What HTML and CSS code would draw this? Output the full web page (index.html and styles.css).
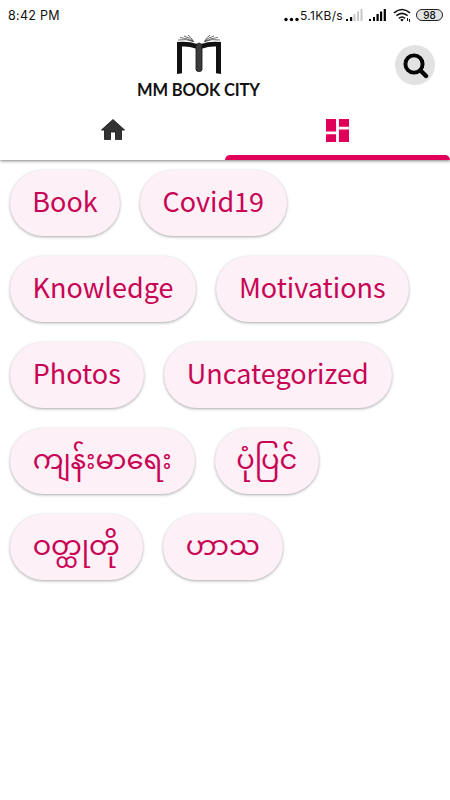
FILE: index.html
```html
<!DOCTYPE html>
<html lang="my">
<head>
<meta charset="utf-8">
<title>MM Book City</title>
<link rel="stylesheet" href="styles.css">
</head>
<body>
<header class="header">
  <div class="status">
    <span class="clock">8:42 PM</span>
    <svg class="dots" viewBox="0 0 16 5"><circle cx="2" cy="2.500" r="1.700"/><circle cx="7.500" cy="2.500" r="1.700"/><circle cx="13" cy="2.500" r="1.700"/></svg>
    <span class="speed">5.1KB/s</span>
    <svg class="signal" viewBox="0 0 18 12"><path d="M0 10h2v2H0zM4 8h2.200v4H4z"/><path fill="#c8c8c8" d="M7.500 5h2v7h-2zM11 2.500h2V12h-2zM14.500 0h2v12h-2z"/></svg>
    <svg class="signal second" viewBox="0 0 18 12"><path d="M0 10h2v2H0zM4 8h2v4H4zM7.500 5h2.200v7H7.500zM11 2.500h2.200V12H11zM14.700 0h2.200v12h-2.200z"/></svg>
    <svg class="wifi" viewBox="0 0 19 15"><g fill="none" stroke="#111" stroke-width="1.600"><path d="M1 4.800Q9 -1.800 17 4.800M3.400 7.600Q9 3 14.600 7.600M5.900 10.300Q9 7.700 12.100 10.300"/></g><path d="M7.200 11.800Q9 10.400 10.800 11.800L9 13.500z"/><path d="M14.500 13v-3M16.500 11v3" stroke="#111"/></svg>
    <span class="battery">98</span>
  </div>
  <div class="brand">
    <div class="logo">
      <svg class="book" viewBox="0 0 48 42">
        <path fill="#111" d="M2 8Q14 7 22 10H26Q34 7 46 8V40L41 39.300V12.500Q34 12 27.500 14.500H20.500Q14 12 7 12.500V39.300L2 40z"/>
        <path fill="#3c3c3c" stroke="#111" stroke-width=".8" d="M21 10.500L24 9L27 10.500V35.500Q27 37.500 24 37.500Q21 37.500 21 35.500z"/>
        <path fill="none" stroke="#333" stroke-width=".7" d="M3 6Q11 4.500 18.500 7.500M5 3.500Q12 4 18.500 7.500M9 2Q15 3.500 18.500 7.500M13 1Q17 4 18.500 7.500M45 6Q37 4.500 29.500 7.500M43 3.500Q36 4 29.500 7.500M39 2Q33 3.500 29.500 7.500M35 1Q31 4 29.500 7.500"/>
      </svg>
      <svg class="wordmark" viewBox="0 0 126 20"><text x="2" y="15" textLength="123">MM BOOK CITY</text></svg>
    </div>
    <button class="search" aria-label="Search"><svg viewBox="0 0 26 26"><circle cx="11" cy="11" r="8.600" fill="none" stroke="#050505" stroke-width="3.900"/><path d="M17.500 17.500L23 23" stroke="#050505" stroke-width="4.400" stroke-linecap="round"/></svg></button>
  </div>
  <nav class="tabs">
    <a class="tab"><svg viewBox="0 0 24 21"><path fill="#333" stroke="#111" stroke-width=".8" d="M12 .5L.4 11H3.500V20.600h6V13h5v7.600h6V11h3.100z"/></svg></a>
    <a class="tab active"><svg viewBox="0 0 24 24"><path fill="#e0005a" d="M0 0h10.500v13H0zM13.500 0H24v8H13.500zM0 16h10.500v8H0zM13.500 11H24v13H13.500z"/></svg></a>
  </nav>
</header>
<main class="categories">
  <div class="row"><a class="pill w110">Book</a><a class="pill w147">Covid19</a></div>
  <div class="row"><a class="pill w186">Knowledge</a><a class="pill w193">Motivations</a></div>
  <div class="row"><a class="pill w134">Photos</a><a class="pill w229">Uncategorized</a></div>
  <div class="row"><a class="pill w185 my">ကျန်းမာရေး</a><a class="pill w105 my">ပုံပြင်</a></div>
  <div class="row"><a class="pill w133 my">ဝတ္ထုတို</a><a class="pill w121 my">ဟာသ</a></div>
</main>
</body>
</html>
```
FILE: styles.css
```css
* { box-sizing: border-box; }
body { margin: 0; background: #fff; width: 450px; height: 800px; overflow: hidden; font-family: "Noto Sans CJK SC", "Noto Sans", sans-serif; }
svg { display: block; }
.header { height: 160px; background: #fff; box-shadow: 0 1px 3px rgba(0,0,0,.5); }
.status { height: 30px; display: flex; align-items: center; padding: 0 7px 0 8px; font-family: Inter, sans-serif; font-size: 12.5px; color: #111; letter-spacing: .3px; }
.clock { margin-right: auto; }
.dots { width: 16px; height: 5px; margin: 8px 0 0 0; }
.speed { width: 46px; font-size: 12px; letter-spacing: .3px; white-space: nowrap; }
.signal { width: 18px; height: 12px; }
.second { margin-left: 5px; }
.wifi { width: 19px; height: 15px; margin: 1px 4px 0 6px; }
.battery { width: 27px; height: 12px; border: 1px solid #222; border-radius: 6px; background: #e4e4e4; font-size: 10px; font-weight: 500; line-height: 10px; text-align: center; letter-spacing: 0; }
.brand { height: 80px; display: grid; grid-template-columns: 135px 127px 1fr; }
.logo { grid-column: 2; padding-top: 4px; }
.book { width: 48px; height: 42px; margin-left: 40px; }
.wordmark { width: 126px; height: 20px; margin-top: 5px; overflow: visible; font-family: Lato, sans-serif; font-size: 16.5px; font-weight: 700; fill: #111; }
.search { width: 40px; height: 40px; margin: 15px 0 0 133px; padding: 2px 0 0 1px; border: 0; border-radius: 50%; background: #e2e2e2; display: grid; place-items: center; }
.search svg { width: 26px; height: 26px; }
.tabs { height: 50px; display: flex; }
.tab { width: 225px; display: flex; justify-content: center; padding-top: 9px; }
.tab svg { width: 24px; height: 21px; }
.tab.active { flex-direction: column; justify-content: space-between; align-items: center; }
.tab.active svg { width: 23px; height: 23px; }
.active::after { content: ""; width: 225px; height: 5px; border-radius: 5px 5px 0 0; background: #e0005a; }
.categories { padding: 10px; display: flex; flex-direction: column; gap: 20px; }
.row { display: flex; gap: 20px; }
.pill { height: 66px; border-radius: 33px; background: #fdf0f7; box-shadow: 0 1px 3px rgba(0,0,0,.34); color: #c80454; font-size: 27px; line-height: 61px; text-align: center; white-space: nowrap; }
.my { font-family: "Noto Sans Myanmar", Padauk, "Noto Sans CJK SC", sans-serif; font-size: 27.4px; line-height: 71px; }
.w110 { width: 110px; } .w147 { width: 146.500px; } .w186 { width: 186px; } .w193 { width: 192.500px; } .w134 { width: 133.500px; }
.w229 { width: 228.500px; } .w185 { width: 184.500px; } .w105 { width: 104.500px; } .w133 { width: 132.500px; } .w121 { width: 120.500px; }
```
